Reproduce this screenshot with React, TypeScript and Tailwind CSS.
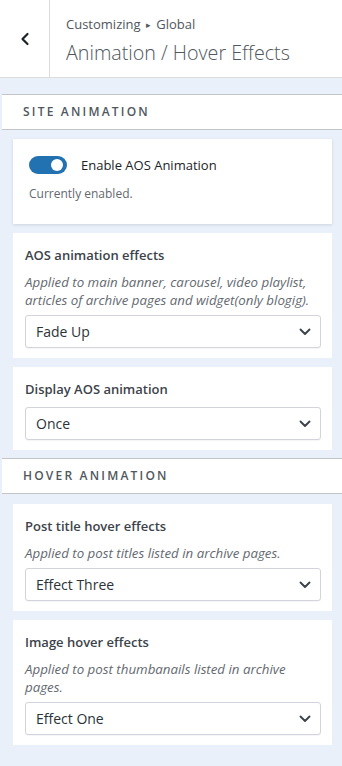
import React from "react";

const font = { fontFamily: '"Open Sans", "Noto Sans", sans-serif' };

function Chevron() {
  return (
    <svg width="12" height="8" viewBox="0 0 12 8" fill="none" className="shrink-0">
      <path d="M1.5 1.5 L6 6 L10.5 1.5" stroke="#3c434a" strokeWidth="1.9" strokeLinecap="round" strokeLinejoin="round" />
    </svg>
  );
}

function Select({ value }: { value: string }) {
  return (
    <div className="flex h-[33px] items-center justify-between rounded-[3px] border border-[#d3d3de] bg-white pl-[10px] pr-[9px] shadow-[0_1px_1px_rgba(0,0,0,0.04)]">
      <span className="text-[14px] text-[#2c3338]">{value}</span>
      <Chevron />
    </div>
  );
}

function Card({ title, desc, value }: { title: string; desc?: string; value: string }) {
  return (
    <div className="ml-[13px] mr-[10px] bg-white pl-[12px] pr-[11px] pt-[13px] pb-[10px]">
      <div className="text-[13px] font-semibold leading-[18px] text-[#3c434a]">{title}</div>
      {desc && (
        <div className="mt-[9px] text-[13.3px] italic leading-[18px] text-[#646970]">{desc}</div>
      )}
      <div className={desc ? "mt-[6px]" : "mt-[9px]"}>
        <Select value={value} />
      </div>
    </div>
  );
}

function SectionHeader({ label }: { label: string }) {
  return (
    <div className="ml-[2px] flex h-[36px] items-center border-y border-[#c3c4c7] bg-white pl-[21px]">
      <span className="text-[12px] font-semibold uppercase tracking-[2.2px] text-[#50575e]">{label}</span>
    </div>
  );
}

export default function App() {
  return (
    <div style={font} className="min-h-[766px] w-[342px] bg-[#e9f0fa] pb-[22px]">
      <div className="flex h-[78px] border-b border-[#dcdcde] bg-white">
        <div className="flex w-[50px] items-center justify-center border-r border-[#dcdcde]">
          <svg width="12" height="14" viewBox="0 0 12 14" fill="none">
            <path d="M8.5 2 L3.5 7 L8.5 12" stroke="#1d2327" strokeWidth="2.2" strokeLinecap="round" strokeLinejoin="round" />
          </svg>
        </div>
        <div className="flex flex-col pl-[16px] pt-[14px]">
          <div className="text-[13px] leading-[20px] text-[#50575e]">
            Customizing <span className="mx-[2px] text-[9px] align-[1px]">▸</span> Global
          </div>
          <div className="mt-[5px] text-[19.7px] font-light leading-[26px] text-[#50575e]">Animation / Hover Effects</div>
        </div>
      </div>

      <div className="mt-[16px]">
        <SectionHeader label="Site Animation" />
      </div>

      <div className="ml-[13px] mr-[10px] mt-[9px] bg-white pl-[16px] pr-[12px] pt-[16px] pb-[21px] shadow-[0_1px_3px_rgba(0,0,0,0.12)]">
        <div className="flex items-center">
          <div className="relative h-[18px] w-[38px] rounded-full bg-[#2271b1]">
            <div className="absolute right-[4px] top-[3px] h-[12px] w-[12px] rounded-full bg-white" />
          </div>
          <span className="ml-[14px] text-[13px] leading-[20px] text-[#1d2327]">Enable AOS Animation</span>
        </div>
        <div className="mt-[10px] text-[12px] leading-[18px] text-[#646970]">Currently enabled.</div>
      </div>

      <div className="mt-[9px]">
        <Card
          title="AOS animation effects"
          desc="Applied to main banner, carousel, video playlist, articles of archive pages and widget(only blogig)."
          value="Fade Up"
        />
      </div>
      <div className="mt-[9px]">
        <Card title="Display AOS animation" value="Once" />
      </div>

      <div className="mt-[8px]">
        <SectionHeader label="Hover Animation" />
      </div>

      <div className="mt-[10px]">
        <Card
          title="Post title hover effects"
          desc="Applied to post titles listed in archive pages."
          value="Effect Three"
        />
      </div>
      <div className="mt-[9px]">
        <Card
          title="Image hover effects"
          desc="Applied to post thumbanails listed in archive pages."
          value="Effect One"
        />
      </div>
    </div>
  );
}
